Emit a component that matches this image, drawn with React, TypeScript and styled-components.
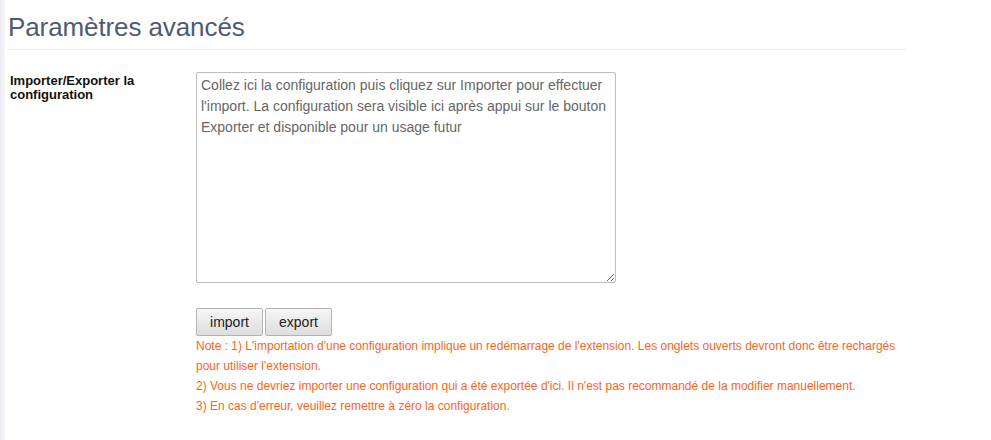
import styled, { createGlobalStyle } from "styled-components";

const GlobalStyle = createGlobalStyle`
	html, body {
		margin: 0;
		padding: 0;
		background: #fff;
		font-family: "Liberation Sans", Arial, sans-serif;
	}
`;

const Page = styled.div`
	display: flex;
	min-height: 440px;
`;

const SideStrip = styled.div`
	width: 5px;
	flex-shrink: 0;
	background: linear-gradient(to right, #ebeaf2, #f7f7fa);
`;

const Content = styled.div`
	width: 899px;
	padding: 0 0 0 2px;
`;

const Title = styled.h1`
	margin: 0;
	padding: 13px 0 8px 1px;
	font-size: 26px;
	font-weight: normal;
	line-height: 28px;
	letter-spacing: -0.1px;
	color: #4f5b73;
	border-bottom: 1px solid #ebebeb;
`;

const Row = styled.div`
	display: grid;
	grid-template-columns: 189px 1fr;
	padding-top: 22px;
`;

const Label = styled.div`
	padding: 2px 0 0 3px;
	font-size: 13px;
	font-weight: bold;
	line-height: 14px;
	color: #111;
`;

const Field = styled.div`
	display: flex;
	flex-direction: column;
`;

const TextArea = styled.textarea`
	box-sizing: border-box;
	width: 420px;
	height: 211px;
	margin: 0;
	padding: 2px 4px;
	border: 1px solid #bdbdbd;
	border-radius: 2px;
	font-family: "Liberation Sans", Arial, sans-serif;
	font-size: 14px;
	line-height: 21px;
	color: #555;
	resize: both;

	&::placeholder {
		color: #666;
	}
`;

const Buttons = styled.div`
	display: flex;
	gap: 2px;
	margin-top: 25px;
`;

const Button = styled.button`
	width: 67px;
	height: 28px;
	margin: 0;
	padding: 0;
	border: 1px solid #b4b4b4;
	border-radius: 2px;
	background: linear-gradient(to bottom, #f6f6f6, #dddddd);
	font-family: "Liberation Sans", Arial, sans-serif;
	font-size: 14px;
	color: #222;
	cursor: pointer;
`;

const Note = styled.p`
	margin: 0;
	font-size: 12px;
	line-height: 20px;
	color: #ff6319;
`;

export default function App() {
	return (
		<>
			<GlobalStyle />
			<Page>
				<SideStrip />
				<Content>
					<Title>Paramètres avancés</Title>
					<Row>
						<Label>
							Importer/Exporter la
							<br />
							configuration
						</Label>
						<Field>
							<TextArea placeholder="Collez ici la configuration puis cliquez sur Importer pour effectuer l'import. La configuration sera visible ici après appui sur le bouton Exporter et disponible pour un usage futur" />
							<Buttons>
								<Button>import</Button>
								<Button>export</Button>
							</Buttons>
							<Note>
								Note : 1) L'importation d'une configuration implique un redémarrage de l'extension. Les onglets ouverts devront donc être rechargés
								<br />
								pour utiliser l'extension.
								<br />
								2) Vous ne devriez importer une configuration qui a été exportée d'ici. Il n'est pas recommandé de la modifier manuellement.
								<br />
								3) En cas d'erreur, veuillez remettre à zéro la configuration.
							</Note>
						</Field>
					</Row>
				</Content>
			</Page>
		</>
	);
}
